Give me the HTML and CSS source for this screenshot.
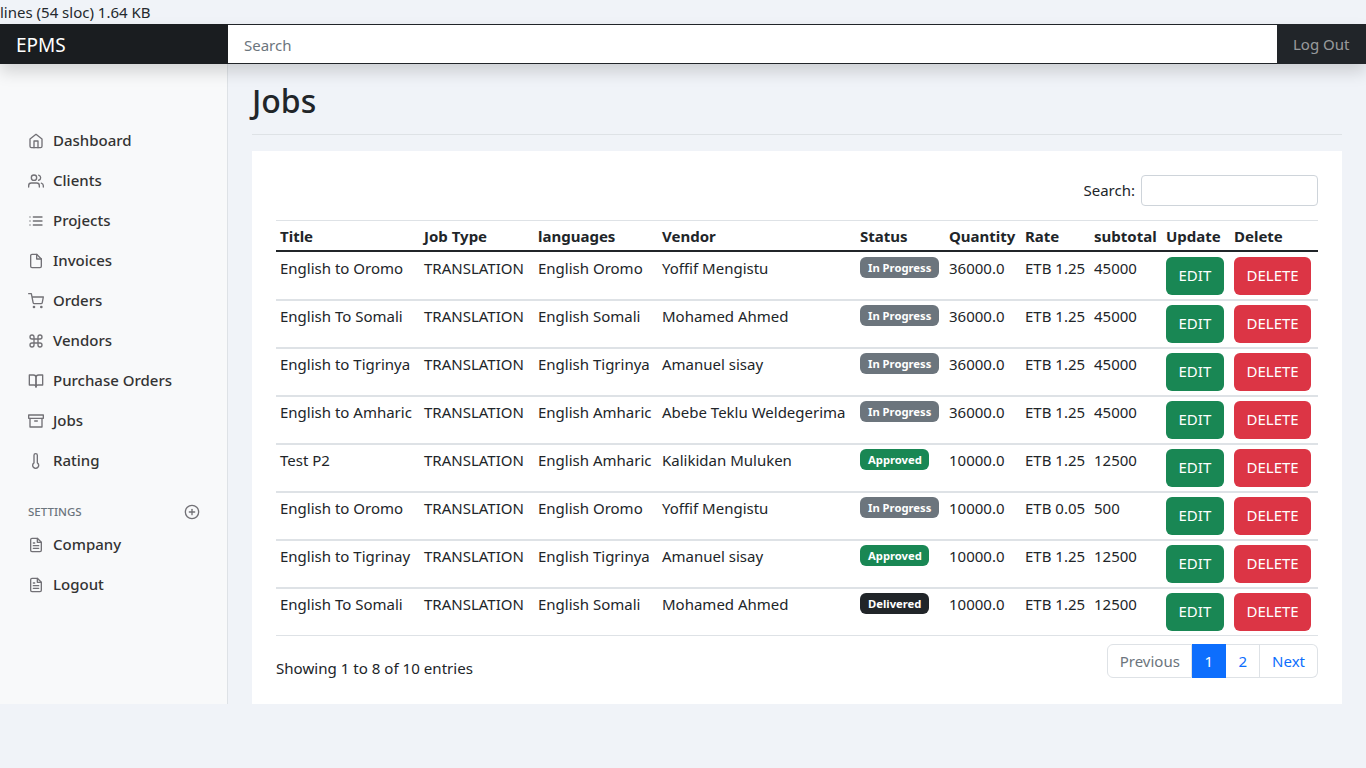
FILE: index.html
```html
<!DOCTYPE html>
<html>
<head>
  <title>EPMS - Jobs</title>
  <meta name="viewport" content="width=device-width, initial-scale=1.0">
  <link rel="stylesheet" href="styles.css">
</head>
<body>
  <div class="file-info">lines (54 sloc) 1.64 KB</div>

  <header class="navbar">
    <a class="brand" href="#">EPMS</a>
    <input class="nav-search" type="text" placeholder="Search">
    <a class="nav-logout" href="#">Log Out</a>
  </header>

  <div class="layout">
    <nav class="sidebar">
      <a class="nav-link" href="#">
        <svg class="icon" viewBox="0 0 24 24"><path d="M3 9l9-7 9 7v11a2 2 0 0 1-2 2H5a2 2 0 0 1-2-2z"/><polyline points="9 22 9 12 15 12 15 22"/></svg>
        Dashboard
      </a>
      <a class="nav-link" href="#">
        <svg class="icon" viewBox="0 0 24 24"><path d="M17 21v-2a4 4 0 0 0-4-4H5a4 4 0 0 0-4 4v2"/><circle cx="9" cy="7" r="4"/><path d="M23 21v-2a4 4 0 0 0-3-3.87"/><path d="M16 3.13a4 4 0 0 1 0 7.75"/></svg>
        Clients
      </a>
      <a class="nav-link" href="#">
        <svg class="icon" viewBox="0 0 24 24"><line x1="8" y1="6" x2="21" y2="6"/><line x1="8" y1="12" x2="21" y2="12"/><line x1="8" y1="18" x2="21" y2="18"/><line x1="3" y1="6" x2="3.01" y2="6"/><line x1="3" y1="12" x2="3.01" y2="12"/><line x1="3" y1="18" x2="3.01" y2="18"/></svg>
        Projects
      </a>
      <a class="nav-link" href="#">
        <svg class="icon" viewBox="0 0 24 24"><path d="M13 2H6a2 2 0 0 0-2 2v16a2 2 0 0 0 2 2h12a2 2 0 0 0 2-2V9z"/><polyline points="13 2 13 9 20 9"/></svg>
        Invoices
      </a>
      <a class="nav-link" href="#">
        <svg class="icon" viewBox="0 0 24 24"><circle cx="9" cy="21" r="1"/><circle cx="20" cy="21" r="1"/><path d="M1 1h4l2.68 13.39a2 2 0 0 0 2 1.61h9.72a2 2 0 0 0 2-1.61L23 6H6"/></svg>
        Orders
      </a>
      <a class="nav-link" href="#">
        <svg class="icon" viewBox="0 0 24 24"><path d="M18 3a3 3 0 0 0-3 3v12a3 3 0 0 0 3 3 3 3 0 0 0 3-3 3 3 0 0 0-3-3H6a3 3 0 0 0-3 3 3 3 0 0 0 3 3 3 3 0 0 0 3-3V6a3 3 0 0 0-3-3 3 3 0 0 0-3 3 3 3 0 0 0 3 3h12a3 3 0 0 0 3-3 3 3 0 0 0-3-3z"/></svg>
        Vendors
      </a>
      <a class="nav-link" href="#">
        <svg class="icon" viewBox="0 0 24 24"><path d="M2 3h6a4 4 0 0 1 4 4v14a3 3 0 0 0-3-3H2z"/><path d="M22 3h-6a4 4 0 0 0-4 4v14a3 3 0 0 1 3-3h7z"/></svg>
        Purchase Orders
      </a>
      <a class="nav-link" href="#">
        <svg class="icon" viewBox="0 0 24 24"><polyline points="21 8 21 21 3 21 3 8"/><rect x="1" y="3" width="22" height="5"/><line x1="10" y1="12" x2="14" y2="12"/></svg>
        Jobs
      </a>
      <a class="nav-link" href="#">
        <svg class="icon" viewBox="0 0 24 24"><path d="M14 14.76V3.5a2.5 2.5 0 0 0-5 0v11.26a4.5 4.5 0 1 0 5 0z"/></svg>
        Rating
      </a>

      <h6 class="sidebar-heading">
        <span>Settings</span>
        <svg class="icon" viewBox="0 0 24 24"><circle cx="12" cy="12" r="10"/><line x1="12" y1="8" x2="12" y2="16"/><line x1="8" y1="12" x2="16" y2="12"/></svg>
      </h6>
      <a class="nav-link" href="#">
        <svg class="icon" viewBox="0 0 24 24"><path d="M14 2H6a2 2 0 0 0-2 2v16a2 2 0 0 0 2 2h12a2 2 0 0 0 2-2V8z"/><polyline points="14 2 14 8 20 8"/><line x1="16" y1="13" x2="8" y2="13"/><line x1="16" y1="17" x2="8" y2="17"/><polyline points="10 9 9 9 8 9"/></svg>
        Company
      </a>
      <a class="nav-link" href="#">
        <svg class="icon" viewBox="0 0 24 24"><path d="M14 2H6a2 2 0 0 0-2 2v16a2 2 0 0 0 2 2h12a2 2 0 0 0 2-2V8z"/><polyline points="14 2 14 8 20 8"/><line x1="16" y1="13" x2="8" y2="13"/><line x1="16" y1="17" x2="8" y2="17"/><polyline points="10 9 9 9 8 9"/></svg>
        Logout
      </a>
    </nav>

    <main class="content">
      <h1 class="page-title">Jobs</h1>

      <div class="card">
        <div class="table-filter">
          <label for="table-search">Search:</label>
          <input id="table-search" type="search">
        </div>

        <table class="jobs-table">
          <colgroup>
            <col class="col-title"><col class="col-type"><col class="col-lang"><col class="col-vendor"><col class="col-status"><col class="col-qty"><col class="col-rate"><col class="col-sub"><col class="col-update"><col class="col-delete">
          </colgroup>
          <thead>
            <tr><th>Title</th><th>Job Type</th><th>languages</th><th>Vendor</th><th>Status</th><th>Quantity</th><th>Rate</th><th>subtotal</th><th>Update</th><th>Delete</th></tr>
          </thead>
          <tbody>
            <tr>
              <td>English to Oromo</td><td>TRANSLATION</td><td>English Oromo</td><td>Yoffif Mengistu</td>
              <td><span class="badge badge-grey">In Progress</span></td>
              <td>36000.0</td><td>ETB 1.25</td><td>45000</td>
              <td><a class="btn btn-green" href="#">EDIT</a></td><td><a class="btn btn-red" href="#">DELETE</a></td>
            </tr>
            <tr>
              <td>English To Somali</td><td>TRANSLATION</td><td>English Somali</td><td>Mohamed Ahmed</td>
              <td><span class="badge badge-grey">In Progress</span></td>
              <td>36000.0</td><td>ETB 1.25</td><td>45000</td>
              <td><a class="btn btn-green" href="#">EDIT</a></td><td><a class="btn btn-red" href="#">DELETE</a></td>
            </tr>
            <tr>
              <td>English to Tigrinya</td><td>TRANSLATION</td><td>English Tigrinya</td><td>Amanuel sisay</td>
              <td><span class="badge badge-grey">In Progress</span></td>
              <td>36000.0</td><td>ETB 1.25</td><td>45000</td>
              <td><a class="btn btn-green" href="#">EDIT</a></td><td><a class="btn btn-red" href="#">DELETE</a></td>
            </tr>
            <tr>
              <td>English to Amharic</td><td>TRANSLATION</td><td>English Amharic</td><td>Abebe Teklu Weldegerima</td>
              <td><span class="badge badge-grey">In Progress</span></td>
              <td>36000.0</td><td>ETB 1.25</td><td>45000</td>
              <td><a class="btn btn-green" href="#">EDIT</a></td><td><a class="btn btn-red" href="#">DELETE</a></td>
            </tr>
            <tr>
              <td>Test P2</td><td>TRANSLATION</td><td>English Amharic</td><td>Kalikidan Muluken</td>
              <td><span class="badge badge-green">Approved</span></td>
              <td>10000.0</td><td>ETB 1.25</td><td>12500</td>
              <td><a class="btn btn-green" href="#">EDIT</a></td><td><a class="btn btn-red" href="#">DELETE</a></td>
            </tr>
            <tr>
              <td>English to Oromo</td><td>TRANSLATION</td><td>English Oromo</td><td>Yoffif Mengistu</td>
              <td><span class="badge badge-grey">In Progress</span></td>
              <td>10000.0</td><td>ETB 0.05</td><td>500</td>
              <td><a class="btn btn-green" href="#">EDIT</a></td><td><a class="btn btn-red" href="#">DELETE</a></td>
            </tr>
            <tr>
              <td>English to Tigrinay</td><td>TRANSLATION</td><td>English Tigrinya</td><td>Amanuel sisay</td>
              <td><span class="badge badge-green">Approved</span></td>
              <td>10000.0</td><td>ETB 1.25</td><td>12500</td>
              <td><a class="btn btn-green" href="#">EDIT</a></td><td><a class="btn btn-red" href="#">DELETE</a></td>
            </tr>
            <tr>
              <td>English To Somali</td><td>TRANSLATION</td><td>English Somali</td><td>Mohamed Ahmed</td>
              <td><span class="badge badge-dark">Delivered</span></td>
              <td>10000.0</td><td>ETB 1.25</td><td>12500</td>
              <td><a class="btn btn-green" href="#">EDIT</a></td><td><a class="btn btn-red" href="#">DELETE</a></td>
            </tr>
          </tbody>
        </table>

        <div class="table-footer">
          <div class="table-info">Showing 1 to 8 of 10 entries</div>
          <div class="pagination">
            <a class="page-link disabled" href="#">Previous</a>
            <a class="page-link active" href="#">1</a>
            <a class="page-link" href="#">2</a>
            <a class="page-link" href="#">Next</a>
          </div>
        </div>
      </div>
    </main>
  </div>
</body>
</html>
```

FILE: styles.css
```css
body {
  margin: 0;
  font-family: "Noto Sans", "Open Sans", sans-serif;
  font-size: 15px;
  line-height: 24px;
  color: #212529;
  background-color: #f0f3f8;
}

a {
  text-decoration: none;
}

.file-info {
  height: 24px;
  font-size: 15px;
  color: #24292e;
}

/* top bar */
.navbar {
  position: relative;
  display: flex;
  height: 40px;
  background-color: #212529;
  box-shadow: 0 8px 16px rgba(0, 0, 0, 0.15);
}

.brand {
  width: 212px;
  padding-left: 16px;
  font-size: 19px;
  line-height: 42px;
  color: #fff;
  background-color: #1a1d20;
}

.nav-search {
  flex: 1;
  min-width: 0;
  padding: 2px 16px 0;
  border: 1px solid #212529;
  border-width: 1px 0;
  font: inherit;
  color: #212529;
  background-color: #fff;
}

.nav-search::placeholder {
  color: #6c757d;
}

.nav-logout {
  width: 73px;
  padding-left: 16px;
  line-height: 40px;
  color: rgba(255, 255, 255, 0.55);
}

.layout {
  display: flex;
  height: 640px;
}

/* sidebar */
.sidebar {
  width: 228px;
  padding-top: 57px;
  box-sizing: border-box;
  flex-shrink: 0;
  background-color: #f8f9fa;
  border-right: 1px solid #dee2e6;
}

.nav-link {
  display: flex;
  align-items: center;
  gap: 9px;
  height: 40px;
  padding: 0 0 2px 28px;
  box-sizing: border-box;
  font-weight: 500;
  color: #333;
}

.nav-link .icon {
  margin-top: 2px;
}

.icon {
  width: 16px;
  height: 16px;
  flex-shrink: 0;
  fill: none;
  stroke: #727176;
  stroke-width: 2;
  stroke-linecap: round;
  stroke-linejoin: round;
}

.sidebar-heading {
  display: flex;
  justify-content: space-between;
  align-items: center;
  height: 22px;
  margin: 20px 0 2px;
  padding: 0 27px 0 28px;
  font-size: 11.5px;
  font-weight: 500;
  text-transform: uppercase;
  color: #6c757d;
}

/* main area */
.content {
  flex: 1;
  min-width: 0;
  padding: 0 24px;
}

.page-title {
  height: 55px;
  margin: 16px 0;
  border-bottom: 1px solid #dee2e6;
  box-sizing: border-box;
  font-size: 32px;
  font-weight: 500;
  line-height: 42px;
}

.card {
  height: 553px;
  padding: 24px;
  box-sizing: border-box;
  background-color: #fff;
}

.table-filter {
  display: flex;
  justify-content: flex-end;
  align-items: center;
  gap: 6px;
  height: 31px;
  margin-bottom: 14px;
}

.table-filter label {
  padding-bottom: 2px;
}

.table-filter input {
  width: 177px;
  height: 31px;
  padding: 0 8px;
  box-sizing: border-box;
  border: 1px solid #ced4da;
  border-radius: 4px;
}

/* table */
.jobs-table {
  width: 100%;
  table-layout: fixed;
  border-collapse: separate;
  border-spacing: 0;
  white-space: nowrap;
}

.col-title { width: 144px; }
.col-type { width: 114px; }
.col-lang { width: 124px; }
.col-vendor { width: 198px; }
.col-status { width: 89px; }
.col-qty { width: 76px; }
.col-rate { width: 69px; }
.col-sub { width: 72px; }
.col-update { width: 68px; }
.col-delete { width: 88px; }

.jobs-table th {
  padding: 3px 4px 2px;
  border-top: 1px solid #dee2e6;
  border-bottom: 2px solid #212529;
  font-weight: 700;
  text-align: left;
}

.jobs-table td {
  padding: 3px 4px 4px;
  border-bottom: 2px solid #dee2e6;
  vertical-align: top;
}

.jobs-table tbody tr:first-child td {
  padding-top: 4px;
}

.jobs-table tbody tr:last-child td {
  border-bottom-width: 1px;
}

.badge {
  display: inline-block;
  height: 21px;
  margin-top: 1px;
  padding: 0 7.5px 0 8px;
  border-radius: 6px;
  font-size: 11.25px;
  font-weight: 700;
  line-height: 21px;
  color: #fff;
  vertical-align: top;
}

.badge-grey { background-color: #6c757d; }
.badge-green { background-color: #198754; }
.badge-dark { background-color: #212529; }

.btn {
  display: inline-block;
  height: 38px;
  margin-top: 1px;
  padding: 0 12.5px;
  border-radius: 6px;
  line-height: 36px;
  color: #fff;
  vertical-align: top;
}

.btn-green { background-color: #198754; }
.btn-red { background-color: #dc3545; }

.table-footer {
  display: flex;
  justify-content: space-between;
  margin-top: 8px;
}

.table-info {
  padding-top: 12px;
  font-size: 15.1px;
}

.pagination {
  display: flex;
  height: 34px;
}

.page-link {
  padding: 0 12px;
  border: 1px solid #dee2e6;
  border-left-width: 0;
  line-height: 32px;
  color: #0d6efd;
  background-color: #fff;
}

.page-link:first-child {
  border-left-width: 1px;
  border-radius: 6px 0 0 6px;
}

.page-link:last-child {
  border-radius: 0 6px 6px 0;
}

.page-link.disabled {
  padding-right: 11px;
  color: #6c757d;
}

.page-link.active {
  padding: 0 12.5px;
  color: #fff;
  background-color: #0d6efd;
  border-color: #0d6efd;
}
```
